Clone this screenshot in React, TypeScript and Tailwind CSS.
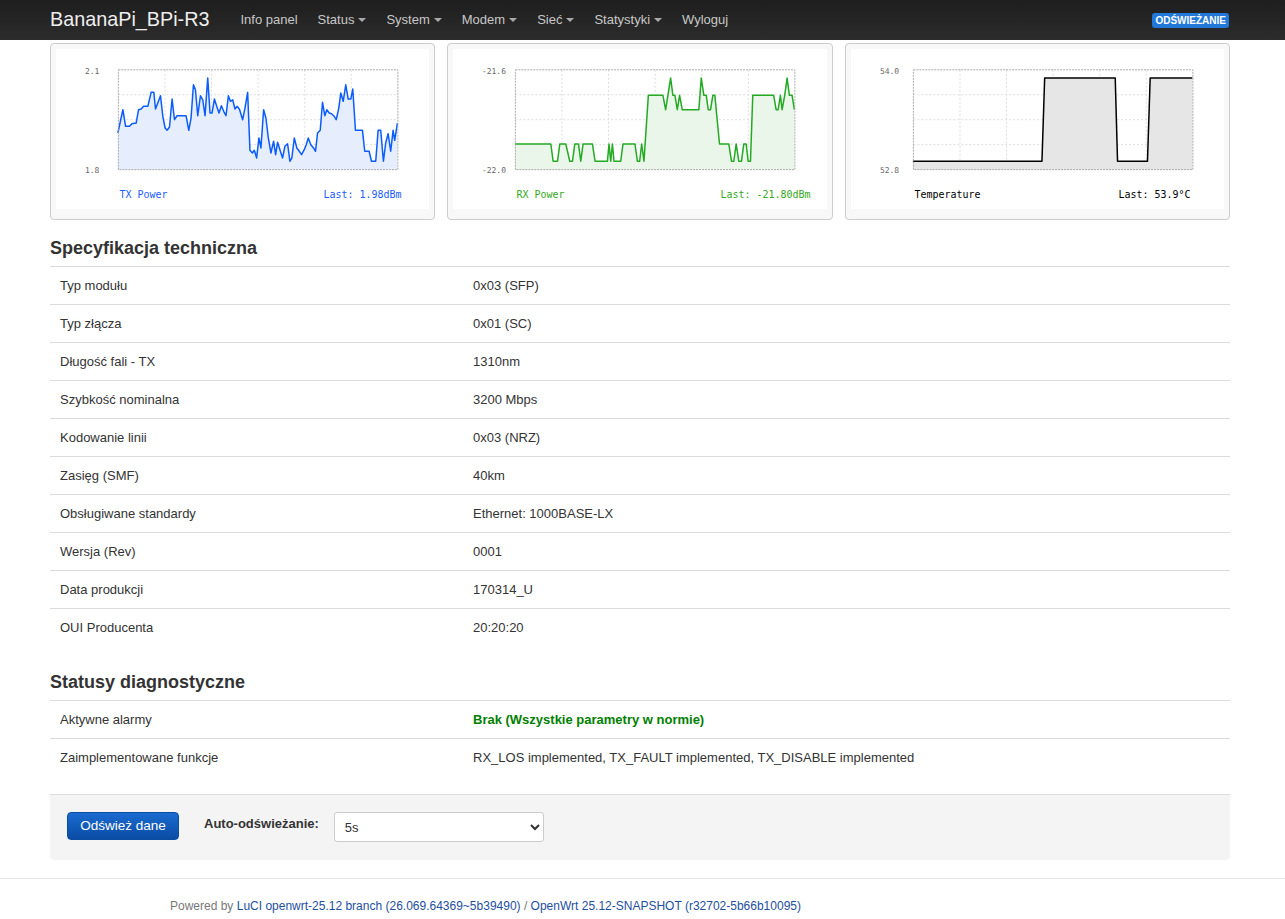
import React from "react";

type Pt = [number, number];

// points are read off the reference in 3x-zoom coordinates, converted below
const txPoints: Pt[] = [
  [210, 270], [225, 200], [233, 250], [245, 250], [252, 242], [265, 240], [272, 200], [280, 198],
  [287, 190], [300, 190], [310, 148], [318, 148], [323, 198], [338, 158], [345, 220], [352, 255],
  [358, 262], [365, 252], [373, 168], [380, 230], [388, 218], [415, 218], [423, 262], [430, 225],
  [437, 125], [443, 140], [450, 218], [458, 158], [465, 170], [472, 218], [480, 105], [487, 210],
  [493, 210], [500, 168], [507, 190], [514, 210], [521, 188], [528, 205], [535, 218], [542, 158],
  [548, 175], [555, 170], [562, 198], [568, 190], [575, 198], [585, 230], [592, 195], [600, 148],
  [607, 322], [614, 330], [620, 322], [627, 345], [634, 285], [640, 315], [648, 200], [655, 225],
  [662, 285], [670, 330], [678, 295], [684, 335], [690, 298], [697, 320], [705, 345], [712, 310],
  [720, 302], [727, 355], [733, 345], [740, 285], [748, 315], [755, 325], [762, 335], [770, 320],
  [776, 305], [782, 285], [790, 305], [798, 315], [804, 325], [810, 270], [818, 262], [825, 178],
  [832, 218], [838, 200], [845, 210], [852, 212], [860, 220], [866, 230], [874, 195], [880, 150],
  [887, 175], [895, 125], [902, 168], [910, 168], [916, 138], [924, 262], [945, 262], [952, 325],
  [965, 325], [972, 355], [985, 355], [992, 262], [1000, 262], [1008, 355], [1015, 300], [1022, 272],
  [1030, 325], [1037, 262], [1042, 292], [1050, 240],
].map(([x, y]) => [x - 3, y] as Pt);

const rxPoints: Pt[] = [
  [207, 303], [315, 303], [322, 355], [335, 355], [342, 303], [360, 303], [372, 355], [380, 355],
  [387, 303], [398, 303], [405, 355], [412, 303], [440, 303], [448, 355], [485, 355], [490, 303],
  [495, 355], [500, 303], [505, 355], [525, 355], [532, 303], [568, 303], [575, 355], [582, 355],
  [588, 303], [595, 355], [608, 157], [652, 157], [660, 200], [667, 157], [675, 105], [682, 157],
  [688, 157], [695, 200], [702, 157], [710, 200], [760, 200], [767, 105], [775, 157], [782, 157],
  [788, 200], [795, 200], [802, 157], [808, 157], [822, 303], [850, 303], [858, 355], [865, 355],
  [872, 303], [880, 355], [888, 355], [895, 303], [902, 303], [908, 355], [915, 355], [922, 157],
  [985, 157], [992, 200], [998, 200], [1005, 157], [1010, 200], [1018, 157], [1025, 105], [1032, 157],
  [1040, 157], [1047, 200],
];

const tempPoints: Pt[] = [
  [207, 355], [595, 355], [603, 105], [815, 105], [822, 355], [912, 355], [920, 105], [1047, 105],
];

const PX0 = 62.5;
const PX1 = 342.5;
const PY0 = 20.7;
const PY1 = 120.7;

function conv([x, y]: Pt): Pt {
  return [x / 3 - 7, y / 3 - 6];
}

function Chart({
  points,
  stroke,
  fill,
  top,
  bottom,
  name,
  last,
  legend,
}: {
  points: Pt[];
  stroke: string;
  fill: string;
  top: string;
  bottom: string;
  name: string;
  last: string;
  legend: string;
}) {
  const pts = points.map(conv);
  const line = pts.map(([x, y]) => `${x.toFixed(1)},${y.toFixed(1)}`).join(" ");
  const area = `${pts[0][0].toFixed(1)},${PY1} ${line} ${pts[pts.length - 1][0].toFixed(1)},${PY1}`;
  const cols = [1, 2, 3, 4, 5].map((i) => PX0 + ((PX1 - PX0) * i) / 6);
  const rows = [1, 2, 3].map((i) => PY0 + ((PY1 - PY0) * i) / 4);

  return (
    <div className="rounded-[4px] border border-[#ccc] bg-[#f8f8f8] px-[5px] pt-[5px] pb-[10px]">
      <svg width="100%" height="160" viewBox="0 0 374 160" className="block bg-white">
        {cols.map((x) => (
          <line key={x} x1={x} y1={PY0} x2={x} y2={PY1} stroke="#ddd" strokeDasharray="2,2" />
        ))}
        {rows.map((y) => (
          <line key={y} x1={PX0} y1={y} x2={PX1} y2={y} stroke="#ddd" strokeDasharray="2,2" />
        ))}
        <polygon points={area} fill={fill} />
        <polyline points={line} fill="none" stroke={stroke} strokeWidth="1.5" strokeLinejoin="round" />
        <rect x={PX0} y={PY0} width={PX1 - PX0} height={PY1 - PY0} fill="none" stroke="#aaa" strokeDasharray="2,1" />
        <g fontFamily="'DejaVu Sans Mono', monospace" fontSize="8" fill="#666">
          <text x="29" y="24.5">{top}</text>
          <text x="29" y="124.5">{bottom}</text>
        </g>
        <g fontFamily="'DejaVu Sans Mono', monospace" fontSize="10" fill={legend}>
          <text x="63.7" y="149.5">{name}</text>
          <text x="268" y="149.5">{last}</text>
        </g>
      </svg>
    </div>
  );
}

const specRows: [string, string][] = [
  ["Typ modułu", "0x03 (SFP)"],
  ["Typ złącza", "0x01 (SC)"],
  ["Długość fali - TX", "1310nm"],
  ["Szybkość nominalna", "3200 Mbps"],
  ["Kodowanie linii", "0x03 (NRZ)"],
  ["Zasięg (SMF)", "40km"],
  ["Obsługiwane standardy", "Ethernet: 1000BASE-LX"],
  ["Wersja (Rev)", "0001"],
  ["Data produkcji", "170314_U"],
  ["OUI Producenta", "20:20:20"],
];

function Row({ label, children }: { label: string; children: React.ReactNode }) {
  return (
    <div className="flex h-[38px] items-center border-t border-[#ddd] text-[13px] text-[#333]">
      <div className="w-[35%] px-[10px]">{label}</div>
      <div className="flex-1 px-[10px]">{children}</div>
    </div>
  );
}

function Caret() {
  return (
    <span className="ml-[4px] inline-block h-0 w-0 border-x-[4px] border-t-[4px] border-x-transparent border-t-[#aaa] align-middle" />
  );
}

const navItems: { label: string; caret: boolean }[] = [
  { label: "Info panel", caret: false },
  { label: "Status", caret: true },
  { label: "System", caret: true },
  { label: "Modem", caret: true },
  { label: "Sieć", caret: true },
  { label: "Statystyki", caret: true },
  { label: "Wyloguj", caret: false },
];

export default function App() {
  return (
    <div className="min-h-screen bg-white font-['Liberation_Sans',Arial,sans-serif] text-[#333]">
      <header className="h-10 bg-gradient-to-b from-[#1e1e1e] to-[#2c2c2c]">
        <div className="ml-[50px] flex h-full w-[1180px] items-center">
          <span className="text-[19.8px] leading-none text-[#eee]">BananaPi_BPi-R3</span>
          <nav className="ml-[21px] flex items-center">
            {navItems.map((n) => (
              <span key={n.label} className="flex items-center px-[10px] text-[13px] text-[#c8c8c8]">
                {n.label}
                {n.caret && <Caret />}
              </span>
            ))}
          </nav>
          <span className="mr-px ml-auto rounded-[3px] bg-[#2178d8] px-[3px] py-[1px] text-[10px] leading-[13px] font-bold text-white">
            ODŚWIEŻANIE
          </span>
        </div>
      </header>

      <main className="ml-[50px] w-[1180px]">
        <div className="mt-[3px] grid grid-cols-3 gap-3">
          <Chart points={txPoints} stroke="#0a5cff" fill="#e6eefd" top="2.1" bottom="1.8" name="TX Power" last="Last: 1.98dBm" legend="#1a5cff" />
          <Chart points={rxPoints} stroke="#22aa22" fill="#e9f6e9" top="-21.6" bottom="-22.0" name="RX Power" last="Last: -21.80dBm" legend="#33aa22" />
          <Chart points={tempPoints} stroke="#000" fill="#e6e6e6" top="54.0" bottom="52.8" name="Temperature" last="Last: 53.9°C" legend="#000" />
        </div>

        <h2 className="mt-[18px] mb-[8px] text-[18px] leading-[20px] font-bold text-[#333]">Specyfikacja techniczna</h2>
        <div>
          {specRows.map(([l, v]) => (
            <Row key={l} label={l}>
              {v}
            </Row>
          ))}
        </div>

        <h2 className="mt-[26px] mb-[8px] text-[18px] leading-[20px] font-bold text-[#333]">Statusy diagnostyczne</h2>
        <div>
          <Row label="Aktywne alarmy">
            <span className="font-bold text-[#008000]">Brak (Wszystkie parametry w normie)</span>
          </Row>
          <Row label="Zaimplementowane funkcje">RX_LOS implemented, TX_FAULT implemented, TX_DISABLE implemented</Row>
        </div>

        <div className="mt-[18px] flex h-[66px] items-start gap-[25px] rounded-b-[4px] border-t border-[#ddd] bg-[#f4f4f4] px-[17px] pt-[17px]">
          <button className="h-[28px] w-[112px] rounded-[4px] border border-[#0b4da3] bg-gradient-to-b from-[#1a6bd0] to-[#0a4ca4] text-[13.5px] text-white">
            Odśwież dane
          </button>
          <div className="flex items-start gap-[15px]">
            <span className="mt-[2px] text-[13px] font-bold text-[#333]">Auto-odświeżanie:</span>
            <select className="h-[30px] w-[210px] rounded-[3px] border border-[#ccc] bg-white px-[6px] text-[13px] text-[#333]">
              <option>5s</option>
              <option>10s</option>
              <option>30s</option>
              <option>Wyłączone</option>
            </select>
          </div>
        </div>
      </main>

      <footer className="mt-[18px] border-t border-[#e5e5e5] pt-[18px] pb-[8px] pl-[170px] text-[12px] text-[#777]">
        Powered by <span className="text-[#1e4fa0]">LuCI openwrt-25.12 branch (26.069.64369~5b39490)</span> /{" "}
        <span className="text-[#1e4fa0]">OpenWrt 25.12-SNAPSHOT (r32702-5b66b10095)</span>
      </footer>
    </div>
  );
}
